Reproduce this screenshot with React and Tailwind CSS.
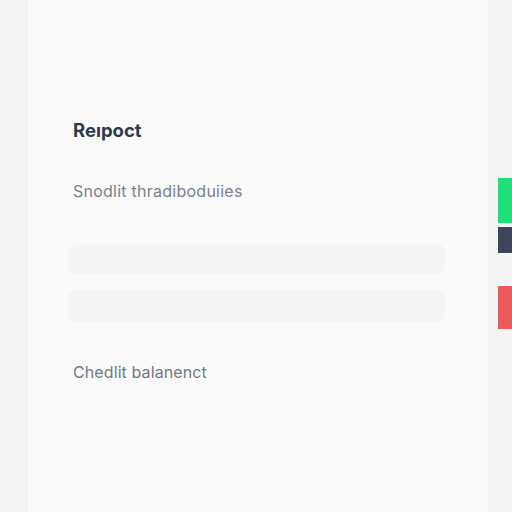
import React from 'react';

const font = { fontFamily: 'Inter, "Liberation Sans", sans-serif' };

const App = () => {
  return (
    <div className="w-full h-[512px] flex bg-[#f4f4f4] overflow-hidden" style={font}>
      {/* left gutter */}
      <div className="w-[28px] shrink-0" />

      {/* main panel */}
      <div className="w-[460px] shrink-0 bg-[#fafafa] flex flex-col px-10 pt-[118px] shadow-[0_0_3px_rgba(0,0,0,0.04)]">
        <h1 className="ml-[5px] text-[18.5px] leading-6 font-bold text-[#2f3a4d]">Reıpoct</h1>
        <p className="ml-[5px] mt-[37px] text-[16px] leading-6 tracking-[0.25px] text-[#7b818e]">Snodlit thradiboduiies</p>

        <div className="mt-[41px] flex flex-col gap-[15px] w-[377px]">
          <div className="h-[31px] rounded-lg bg-[#f5f5f5]" />
          <div className="h-[33px] rounded-lg bg-[#f5f5f5]" />
        </div>

        <p className="ml-[5px] mt-[37px] text-[16px] leading-6 tracking-[0.1px] text-[#737985]">Chedlit balanenct</p>
      </div>

      {/* right strip with status bars */}
      <div className="flex-1 flex flex-col pl-[10px] pt-[178px]">
        <div className="h-[45px] bg-[#1fdf78]" />
        <div className="h-[26px] mt-[4px] bg-[#3e4558]" />
        <div className="h-[43px] mt-[33px] bg-[#ec5b5b]" />
      </div>
    </div>
  );
};

export default App;
